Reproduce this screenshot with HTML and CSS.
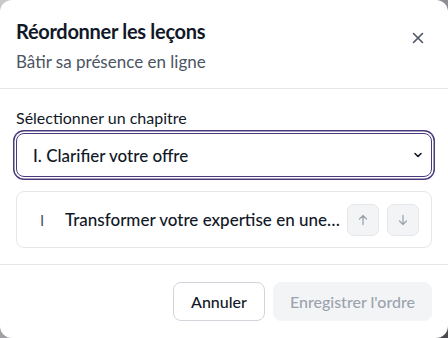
FILE: index.html
```html
<!DOCTYPE html>
<html lang="fr">
<head>
<meta charset="UTF-8">
<meta name="viewport" content="width=device-width, initial-scale=1.0">
<link rel="stylesheet" href="styles.css">
<title>Réordonner les leçons</title>
</head>
<body>

<div class="dialog">
  <div class="dialog-header">
    <div>
      <h2 class="dialog-title">Réordonner les leçons</h2>
      <p class="dialog-sub">Bâtir sa présence en ligne</p>
    </div>
    <button type="button" class="close-btn" aria-label="Fermer">
      <svg width="16" height="16" viewBox="0 0 16 16"><path d="M3.5 3.5l9 9M12.5 3.5l-9 9" stroke="#4b5563" stroke-width="1.6" stroke-linecap="round"/></svg>
    </button>
  </div>

  <div class="dialog-body">
    <label class="field-label" for="chapter">Sélectionner un chapitre</label>
    <div class="select-wrap">
      <select id="chapter" class="chapter-select">
        <option>I. Clarifier votre offre</option>
      </select>
      <svg class="select-caret" width="12" height="12" viewBox="0 0 12 12"><path d="M3 4.5l3 3 3-3" fill="none" stroke="#111827" stroke-width="1.6" stroke-linecap="round" stroke-linejoin="round"/></svg>
    </div>

    <div class="lesson">
      <span class="lesson-num">I</span>
      <span class="lesson-title">Transformer votre expertise en une…</span>
      <div class="lesson-actions">
        <button type="button" class="move-btn" disabled>
          <svg width="14" height="14" viewBox="0 0 14 14"><path d="M7 11.5V2.5M3.5 6L7 2.5 10.5 6" fill="none" stroke="#9ca3af" stroke-width="1.3" stroke-linecap="round" stroke-linejoin="round"/></svg>
        </button>
        <button type="button" class="move-btn" disabled>
          <svg width="14" height="14" viewBox="0 0 14 14"><path d="M7 2.5v9M3.5 8L7 11.5 10.5 8" fill="none" stroke="#9ca3af" stroke-width="1.3" stroke-linecap="round" stroke-linejoin="round"/></svg>
        </button>
      </div>
    </div>
  </div>

  <div class="dialog-footer">
    <button type="button" class="btn btn-outline">Annuler</button>
    <button type="button" class="btn btn-disabled" disabled>Enregistrer l'ordre</button>
  </div>
</div>

</body>
</html>
```

FILE: styles.css
```css
html { background: linear-gradient(135deg, #c9c9cc 0%, #9a9a9e 50%, #4a4a4e 100%); height: 100%; }
body { margin: 0; font-family: "Lato", "Noto Sans", sans-serif; color: #111827; }
.dialog { background: #fff; border-radius: 12px; height: 338px; overflow: hidden; }

.dialog-header { display: flex; justify-content: space-between; align-items: flex-start; padding: 16px; border-bottom: 1px solid #e5e7eb; height: 56px; }
.dialog-title { margin: 3px 0 0; font-size: 20px; font-weight: 700; line-height: 24px; letter-spacing: -0.3px; }
.dialog-sub { margin: 8px 0 0; font-size: 17px; line-height: 22px; color: #4b5563; }
.close-btn { background: none; border: 0; padding: 0; margin: 10px 2px 0 0; width: 24px; height: 24px; display: flex; align-items: center; justify-content: center; cursor: pointer; }

.dialog-body { padding: 18px 16px 16px; border-bottom: 1px solid #e5e7eb; }
.field-label { display: block; font-size: 16px; line-height: 22px; color: #111827; margin-bottom: 4px; }
.select-wrap { position: relative; }
.chapter-select { appearance: none; -webkit-appearance: none; width: 100%; height: 44px; box-sizing: border-box; border: 1.5px solid #4a3b7e; border-radius: 8px; background: #fff; padding: 0 32px 0 16px; font: inherit; font-size: 17px; font-weight: 500; color: #111827; box-shadow: 0 0 0 1.5px #fff, 0 0 0 3px #4a3b7e; outline: none; }
.select-caret { position: absolute; right: 8px; top: 16px; pointer-events: none; }

.lesson { display: flex; align-items: center; margin-top: 14px; height: 57px; box-sizing: border-box; border: 1px solid #e5e7eb; border-radius: 8px; padding: 0 12px 0 23px; }
.lesson-num { width: 25px; font-size: 15px; color: #4b5563; }
.lesson-title { flex: 1; min-width: 0; font-size: 17px; font-weight: 500; white-space: nowrap; margin-right: 12px; }
.lesson-actions { display: flex; gap: 8px; }
.move-btn { width: 32px; height: 32px; border: 1px solid #e5e7eb; border-radius: 7px; background: #f3f4f6; display: flex; align-items: center; justify-content: center; padding: 0; }

.dialog-footer { display: flex; justify-content: flex-end; gap: 8px; padding: 17px 16px; }
.btn { height: 39px; border-radius: 8px; font: inherit; font-size: 16px; font-weight: 500; padding: 0 16px; }
.btn-outline { background: #fff; border: 1px solid #d1d5db; color: #111827; padding: 0 17px; }
.btn-disabled { background: #f3f4f6; border: 1px solid #f3f4f6; color: #9ca3af; }
```
